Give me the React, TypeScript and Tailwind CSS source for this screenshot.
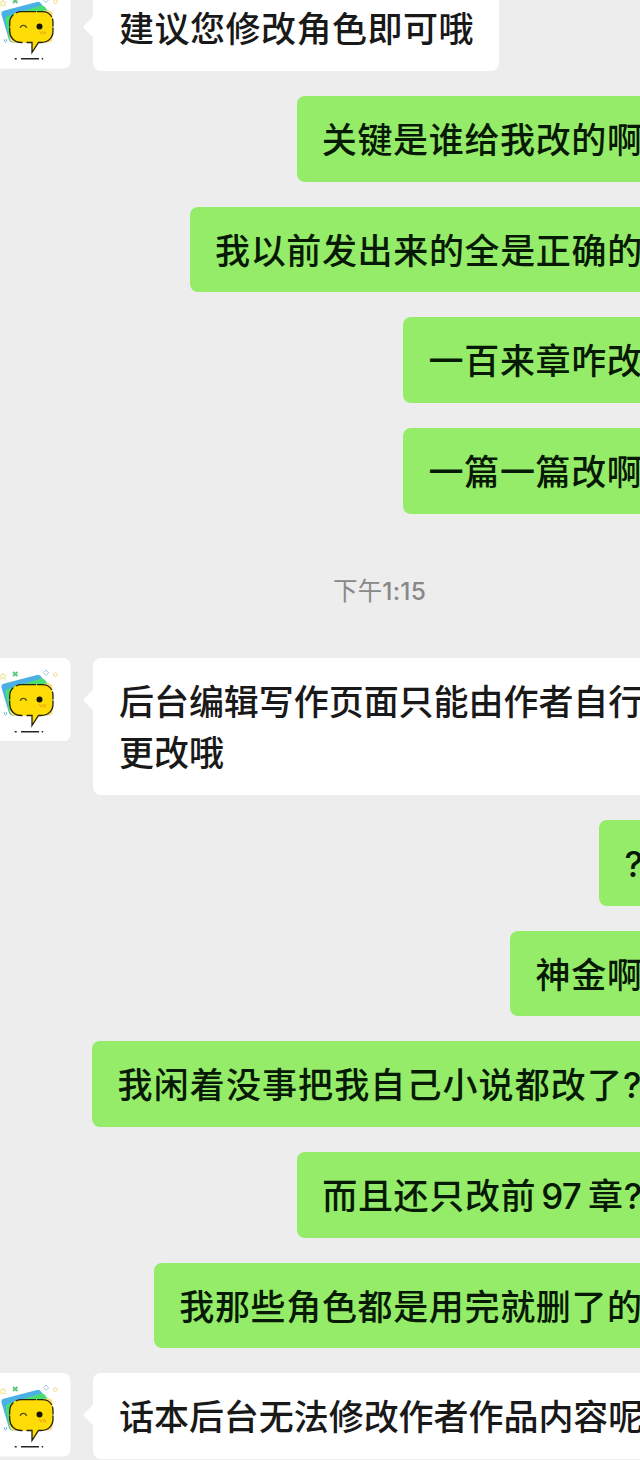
import type { ReactNode } from "react";

function Avatar() {
  return (
    <svg className="h-[83.6px] w-[70.5px] shrink-0" viewBox="0 0 70.5 83.6" fill="none">
      <path d="M-10 0H63.500a7 7 0 0 1 7 7V76.600a7 7 0 0 1-7 7H-10Z" fill="#fff" />
      <path d="M3.500 25.800 37 17q2.500-.6 4 1.500L47 27 34 55 13 57.500Q10 57.500 9 55L1.500 29.500q-.5-2.800 2-3.700Z" fill="#4bb0e4" />
      <path d="M9 30.500 41 20.500q2.500-.5 4 1.500l5 7L36 56l-24 1.500Q9.500 56 9 53L5.500 35q-.3-3.500 3.500-4.500Z" fill="#4ade70" />
      <path d="M44 25.500h5q3.500.5 3.500 4v24q0 3.500-3.500 4H14q-3.500 0-4-4L9 47Z" fill="#fbdc70" />
      <path d="M21 26.700H42C50 26.700 53 32 53 37v9c0 7-5 11.500-12 11.500h-2.500L32 67.500V57.500H21C14 57.500 9.700 52 9.700 46v-8c0-6 4-11.300 11.300-11.300Z" fill="#fddd05" />
      <path d="M16.500 27.800q2-1.100 4.500-1.100h14.500M37.500 26.700H42C47 26.700 50 29 51.500 31.500M52.500 34q.5 1.500.5 4v3M53 43v3c0 7-5 11.500-12 11.500h-2.500L32 67.500V57.500h-5M22 57.500h-1C14 57.500 9.700 52 9.700 46v-3M9.700 41v-3q0-5 3.300-8" stroke="#26220f" strokeWidth="1.3" strokeLinecap="round" />
      <path d="M20.200 42.800q.6-2.500 3.200-2.500t3.200 2.500" stroke="#5b4b08" strokeWidth="1.300" />
      <circle cx="39.500" cy="41.600" r="3" fill="#171500" />
      <path d="m39.300 46.300 2.200 3m.3-3 3 3.200m-.3-3.200 1 2.200" stroke="#ea8f22" strokeWidth="1" />
      <path d="M14.700 73.800h2M21 73.800h18M41.700 73.800h1.500" stroke="#262626" strokeWidth="1.600" />
      <path d="m3 15 1 2.200h2.400l-1.800 1.500.7 2.500-2.300-1.400L.7 21.200l.6-2.500L-.5 17.200H2Z" stroke="#efe28a" strokeWidth=".9" />
      <path d="m13 14 4.500 4M17.500 14 13 18" stroke="#5ac878" strokeWidth="1.700" />
      <path d="m46 12 2.700 2.700L46 17.500l-2.700-2.800Z" stroke="#9fc7e8" strokeWidth="1" />
      <circle cx="55.300" cy="16.600" r="1.800" stroke="#efd979" strokeWidth="1" />
      <path d="m4 54.500 1.500 3M6 54l1 2.500" stroke="#58a7d8" strokeWidth=".9" />
    </svg>
  );
}

function Incoming({ children, width, tracking }: { children: ReactNode; width: string; tracking: string }) {
  return (
    <div className="flex shrink-0 items-start">
      <Avatar />
      <svg className="mt-[31px] ml-[12px] h-[22px] w-[11px] shrink-0" viewBox="0 0 11 22">
        <path d="M11 0 1.200 9.500q-1.400 1.500 0 3L11 22Z" fill="#fff" />
      </svg>
      <div className={`-ml-px shrink-0 rounded-[8px] bg-white pt-[16px] pb-[18px] pl-[26.5px] leading-[51.67px] whitespace-nowrap text-[#191919] ${width} ${tracking}`}>
        {children}
      </div>
    </div>
  );
}

function Outgoing({ children, left, tracking = "tracking-[0.65px]" }: { children: ReactNode; left: string; tracking?: string }) {
  return (
    <div className={`h-[85.67px] shrink-0 overflow-hidden rounded-l-[8px] bg-[#95ec69] pt-[16px] pl-[25.3px] leading-[51.67px] whitespace-nowrap text-[#071a06] ${left} ${tracking}`}>
      {children}
    </div>
  );
}

function Question() {
  return <span className="font-['Inter',sans-serif]">?</span>;
}

export default function App() {
  return (
    <main className="h-[1460px] w-[640px] overflow-hidden bg-[#ededed] font-['Noto_Sans_CJK_SC',sans-serif] text-[35px] font-medium">
      <div className="-mt-[14.67px] flex flex-col gap-[25px]">
        <Incoming width="w-[406px]" tracking="tracking-[0.5px]">建议您修改角色即可哦</Incoming>
        <Outgoing left="ml-[296.5px]">关键是谁给我改的啊</Outgoing>
        <Outgoing left="ml-[189.7px]">我以前发出来的全是正确的</Outgoing>
        <Outgoing left="ml-[403.3px]">一百来章咋改</Outgoing>
        <Outgoing left="ml-[403.3px]">一篇一篇改啊</Outgoing>
        <div className="flex h-[94px] shrink-0 items-center justify-center pt-[11px] pl-[119px] font-['Inter','Noto_Sans_CJK_SC',sans-serif] text-[24.5px] font-normal tracking-[0.2px] text-[#888888]">
          下午<span className="font-medium">1:15</span>
        </div>
        <Incoming width="w-[640px]" tracking="tracking-[-0.05px]">
          后台编辑写作页面只能由作者自行
          <br />
          更改哦
        </Incoming>
        <Outgoing left="ml-[599.3px]"><Question /></Outgoing>
        <Outgoing left="ml-[510.3px]">神金啊</Outgoing>
        <Outgoing left="ml-[92.3px]" tracking="tracking-[1.1px]">我闲着没事把我自己小说都改了<Question /></Outgoing>
        <Outgoing left="ml-[297px]">
          而且还只改前<span className="mr-[7px] ml-[5px] font-['Inter',sans-serif] text-[35px] tracking-[-0.8px]">97</span>章<Question />
        </Outgoing>
        <Outgoing left="ml-[154px]">我那些角色都是用完就删了的</Outgoing>
        <Incoming width="w-[640px]" tracking="tracking-[-0.05px]">话本后台无法修改作者作品内容呢</Incoming>
      </div>
    </main>
  );
}
